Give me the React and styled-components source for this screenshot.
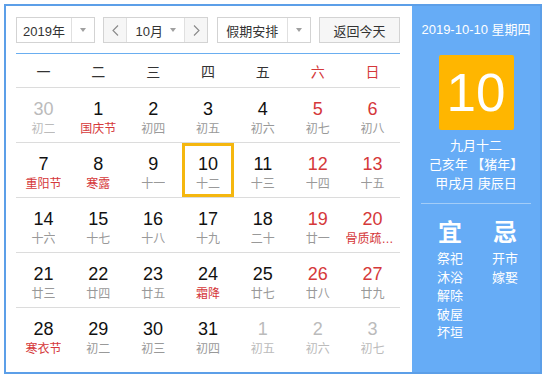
import React from "react";
import styled, { createGlobalStyle } from "styled-components";

const GlobalStyle = createGlobalStyle`
  html, body {
    margin: 0;
    padding: 0;
    background: #fff;
    font-family: "Liberation Sans", "Noto Sans CJK SC", sans-serif;
  }
`;

const RED = "#d5383a";

const Frame = styled.div`
  margin: 4px 0 0 4px;
  width: 534px;
  height: 366px;
  border: 2px solid #5c9fe8;
  display: flex;
`;

const Main = styled.div`
  width: 384px;
  padding: 11px 12px 0 10px;
`;

const Toolbar = styled.div`
  display: flex;
  justify-content: space-between;
  height: 26px;
  margin-bottom: 10px;
`;

const SelectBox = styled.div`
  display: flex;
  width: ${(p) => p.w}px;
  height: 26px;
  box-sizing: border-box;
  border: 1px solid #d3d3d3;
  font-size: 13px;
  color: #333;
  background: #fff;
`;

const SelectLabel = styled.div`
  width: ${(p) => p.w}px;
  border-right: 1px solid #e0e0e0;
  display: flex;
  align-items: center;
  justify-content: center;
`;

const ArrowCell = styled.div`
  flex: 1;
  display: flex;
  align-items: center;
  justify-content: center;
`;

const Caret = styled.span`
  width: 0;
  height: 0;
  border-left: 3.5px solid transparent;
  border-right: 3.5px solid transparent;
  border-top: 4px solid #a0a0a0;
  margin-left: ${(p) => p.ml || 0}px;
`;

const NavBtn = styled.div`
  width: 22px;
  background: #f6f6f6;
  display: flex;
  align-items: center;
  justify-content: center;
  border-right: ${(p) => (p.left ? "1px solid #e0e0e0" : "none")};
  border-left: ${(p) => (p.left ? "none" : "1px solid #e0e0e0")};
`;

const MonthMid = styled.div`
  flex: 1;
  display: flex;
  align-items: center;
  justify-content: center;
  background: #fff;
`;

const TodayBtn = styled.div`
  width: 81px;
  height: 26px;
  box-sizing: border-box;
  border: 1px solid #d3d3d3;
  background: #f6f6f6;
  font-size: 13px;
  color: #333;
  display: flex;
  align-items: center;
  justify-content: center;
`;

const Grid = styled.div`
  display: grid;
  grid-template-columns: repeat(7, 1fr);
`;

const Head = styled(Grid)`
  border-top: 1px solid #6aaef0;
  height: 33px;
  align-items: center;
  font-size: 14px;
`;

const HeadCell = styled.div`
  text-align: center;
  color: ${(p) => (p.red ? RED : "#333")};
`;

const Row = styled(Grid)`
  border-top: 1px solid #dcdcdc;
  height: 54px;
`;

const Cell = styled.div`
  display: flex;
  flex-direction: column;
  align-items: center;
  box-sizing: border-box;
  padding-top: ${(p) => (p.sel ? 8 : 11)}px;
  margin: ${(p) => (p.sel ? "0 1px 0 1px" : "0")};
  border: ${(p) => (p.sel ? "3px solid #f5b70f" : "none")};
  min-width: 0;
`;

const Num = styled.div`
  font-size: 18px;
  line-height: 20px;
  color: ${(p) => p.c};
`;

const Lunar = styled.div`
  font-size: 12px;
  line-height: 16px;
  margin-top: 2px;
  color: ${(p) => p.c};
  max-width: 54px;
  white-space: nowrap;
  overflow: hidden;
  text-overflow: ellipsis;
`;

const Panel = styled.div`
  flex: 1;
  background: #66acf6;
  color: #fff;
  display: flex;
  flex-direction: column;
  align-items: center;
  padding-top: 16px;
`;

const DateLine = styled.div`
  font-size: 13px;
  line-height: 16px;
`;

const DayBox = styled.div`
  margin-top: 17px;
  width: 75px;
  height: 75px;
  background: #ffb600;
  border-radius: 2px;
  font-size: 53px;
  display: flex;
  align-items: center;
  justify-content: center;
`;

const LunarInfo = styled.div`
  margin-top: 6px;
  font-size: 13px;
  line-height: 19px;
  text-align: center;
`;

const Divider = styled.div`
  width: 110px;
  height: 1px;
  background: #a3cdf8;
  margin-top: 10px;
`;

const YiJi = styled.div`
  display: flex;
  gap: 23px;
  margin-top: 14px;
  padding-left: 3px;
`;

const YiCol = styled.div`
  width: 32px;
  display: flex;
  flex-direction: column;
  align-items: center;
`;

const YiTitle = styled.div`
  font-size: 24px;
  font-weight: 600;
  line-height: 30px;
  margin-bottom: 2px;
`;

const YiItem = styled.div`
  font-size: 13px;
  line-height: 18.5px;
`;

const Chevron = ({ dir }) => (
  <svg width="7" height="11" viewBox="0 0 7 11">
    <path
      d={dir === "l" ? "M6 0.5 L1 5.5 L6 10.5" : "M1 0.5 L6 5.5 L1 10.5"}
      fill="none"
      stroke="#888"
      strokeWidth="1.1"
    />
  </svg>
);

const weekdays = ["一", "二", "三", "四", "五", "六", "日"];

// o = other month, w = weekend, r = red lunar, s = selected
const rows = [
  [["30", "初二", "o"], ["1", "国庆节", "r"], ["2", "初四"], ["3", "初五"], ["4", "初六"], ["5", "初七", "w"], ["6", "初八", "w"]],
  [["7", "重阳节", "r"], ["8", "寒露", "r"], ["9", "十一"], ["10", "十二", "s"], ["11", "十三"], ["12", "十四", "w"], ["13", "十五", "w"]],
  [["14", "十六"], ["15", "十七"], ["16", "十八"], ["17", "十九"], ["18", "二十"], ["19", "廿一", "w"], ["20", "骨质疏松日", "wr"]],
  [["21", "廿三"], ["22", "廿四"], ["23", "廿五"], ["24", "霜降", "r"], ["25", "廿七"], ["26", "廿八", "w"], ["27", "廿九", "w"]],
  [["28", "寒衣节", "r"], ["29", "初二"], ["30", "初三"], ["31", "初四"], ["1", "初五", "o"], ["2", "初六", "o"], ["3", "初七", "o"]],
];

const yi = ["祭祀", "沐浴", "解除", "破屋", "坏垣"];
const ji = ["开市", "嫁娶"];

export default function App() {
  return (
    <>
      <GlobalStyle />
      <Frame>
        <Main>
          <Toolbar>
            <SelectBox w={79}>
              <SelectLabel w={54}>2019年</SelectLabel>
              <ArrowCell>
                <Caret />
              </ArrowCell>
            </SelectBox>
            <SelectBox w={105}>
              <NavBtn left>
                <Chevron dir="l" />
              </NavBtn>
              <MonthMid>
                10月
                <Caret ml={7} />
              </MonthMid>
              <NavBtn>
                <Chevron dir="r" />
              </NavBtn>
            </SelectBox>
            <SelectBox w={94}>
              <SelectLabel w={69}>假期安排</SelectLabel>
              <ArrowCell>
                <Caret />
              </ArrowCell>
            </SelectBox>
            <TodayBtn>返回今天</TodayBtn>
          </Toolbar>
          <Head>
            {weekdays.map((w, i) => (
              <HeadCell key={w} red={i > 4}>
                {w}
              </HeadCell>
            ))}
          </Head>
          {rows.map((row, ri) => (
            <Row key={ri}>
              {row.map(([d, l, t = ""], ci) => {
                const other = t.includes("o");
                const numColor = other ? "#bbb" : t.includes("w") ? RED : "#111";
                const lunColor = other ? "#bbb" : t.includes("r") ? RED : "#999";
                return (
                  <Cell key={ci} sel={t === "s"}>
                    <Num c={numColor}>{d}</Num>
                    <Lunar c={lunColor}>{l}</Lunar>
                  </Cell>
                );
              })}
            </Row>
          ))}
        </Main>
        <Panel>
          <DateLine>2019-10-10 星期四</DateLine>
          <DayBox>10</DayBox>
          <LunarInfo>
            九月十二
            <br />
            己亥年 【猪年】
            <br />
            甲戌月 庚辰日
          </LunarInfo>
          <Divider />
          <YiJi>
            <YiCol>
              <YiTitle>宜</YiTitle>
              {yi.map((x) => (
                <YiItem key={x}>{x}</YiItem>
              ))}
            </YiCol>
            <YiCol>
              <YiTitle>忌</YiTitle>
              {ji.map((x) => (
                <YiItem key={x}>{x}</YiItem>
              ))}
            </YiCol>
          </YiJi>
        </Panel>
      </Frame>
    </>
  );
}
